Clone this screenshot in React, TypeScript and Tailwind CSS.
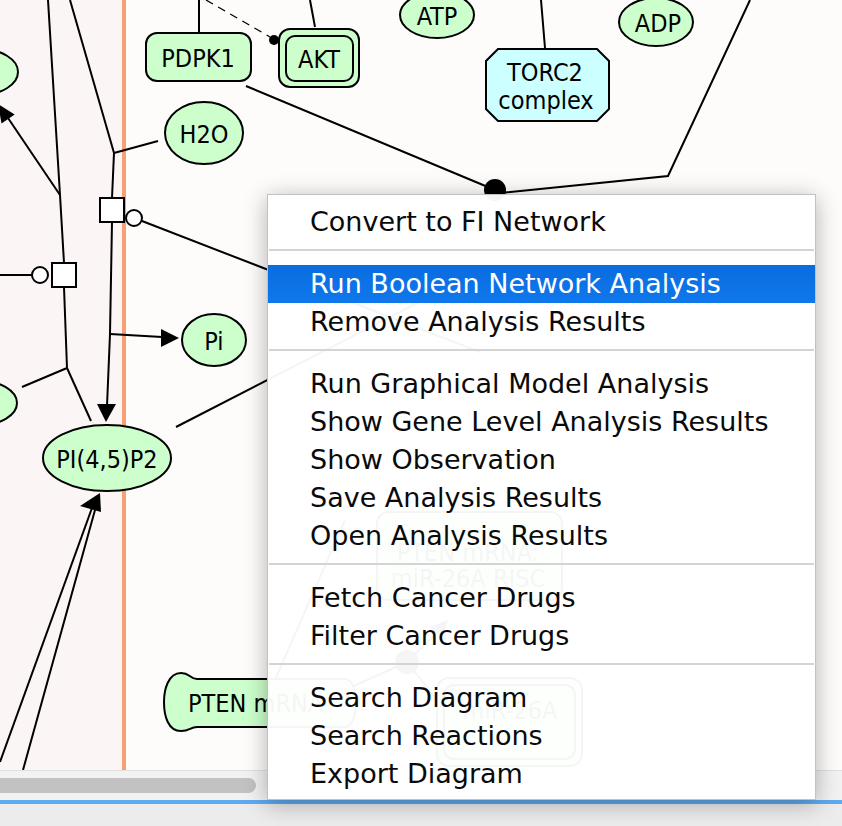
import React from "react";

const groups: string[][] = [
  ["Convert to FI Network"],
  ["Run Boolean Network Analysis", "Remove Analysis Results"],
  [
    "Run Graphical Model Analysis",
    "Show Gene Level Analysis Results",
    "Show Observation",
    "Save Analysis Results",
    "Open Analysis Results",
  ],
  ["Fetch Cancer Drugs", "Filter Cancer Drugs"],
  ["Search Diagram", "Search Reactions", "Export Diagram"],
];

const ACTIVE = "Run Boolean Network Analysis";
const GREEN = "#ccffcc";

function Label({ x, y, children }: { x: number; y: number; children: React.ReactNode }) {
  return (
    <text x={x} y={y} textAnchor="middle" dominantBaseline="central" fill="#000">
      {children}
    </text>
  );
}

function Diagram() {
  const ln = { stroke: "#000", strokeWidth: 2, fill: "none" } as const;
  const node = { stroke: "#000", strokeWidth: 2 } as const;
  return (
    <svg
      width={842}
      height={770}
      className="absolute left-0 top-0 font-['DejaVu_Sans_Condensed','DejaVu_Sans',sans-serif] text-[25px]"
    >
      {/* left compartment */}
      <polyline points="48,0 60,195 64,263" {...ln} />
      <line x1={60} y1={195} x2={8} y2={118} {...ln} />
      <polygon points="-2,104 14.7,114.4 1.5,123.4" fill="#000" />
      <ellipse cx={-20} cy={72} rx={38} ry={23} fill={GREEN} {...node} />
      <line x1={0} y1={275} x2={32} y2={275} {...ln} />
      <circle cx={40} cy={275} r={8} fill="#fff" {...node} />
      <rect x={52} y={263} width={24} height={24} fill="#fff" {...node} />
      <polyline points="64,287 67,368 22,387" {...ln} />
      <line x1={67} y1={368} x2={91} y2={421} {...ln} />
      <ellipse cx={-20} cy={403} rx={37} ry={22} fill={GREEN} {...node} />

      <line x1={70} y1={0} x2={114} y2={153} {...ln} />
      <line x1={114} y1={153} x2={158} y2={141} {...ln} />
      <line x1={114} y1={153} x2={112} y2={198} {...ln} />
      <line x1={142} y1={221} x2={480} y2={352} {...ln} />
      <polyline points="112,222 110,334 107,406" {...ln} />
      <polygon points="106,422 97,404 116,404" fill="#000" />
      <line x1={110} y1={334} x2={162} y2={337} {...ln} />
      <polygon points="179,338 161,329 161,347" fill="#000" />
      <rect x={100} y={198} width={24} height={24} fill="#fff" {...node} />
      <circle cx={134} cy={218} r={8} fill="#fff" {...node} />

      <line x1={0} y1={762} x2={92} y2={508} {...ln} />
      <line x1={23} y1={770} x2={95} y2={510} {...ln} />
      <polygon points="100,493 80,506 101,512" fill="#000" />

      <ellipse cx={204} cy={133} rx={39} ry={31} fill={GREEN} {...node} />
      <Label x={204} y={134}>H2O</Label>
      <ellipse cx={214} cy={340} rx={32} ry={26} fill={GREEN} {...node} />
      <Label x={214} y={341}>Pi</Label>
      <line x1={176} y1={427} x2={470} y2={276} {...ln} />
      <ellipse cx={107} cy={458} rx={64} ry={33} fill={GREEN} {...node} />
      <Label x={107} y={459}>PI(4,5)P2</Label>

      {/* top */}
      <line x1={199} y1={0} x2={199} y2={32} {...ln} />
      <line x1={206} y1={0} x2={270} y2={37} stroke="#000" strokeWidth={1.3} strokeDasharray="8 6" />
      <circle cx={274} cy={40} r={5} fill="#000" />
      <rect x={146} y={33} width={105} height={48} rx={11} fill={GREEN} {...node} />
      <Label x={198} y={58}>PDPK1</Label>
      <line x1={310} y1={0} x2={315} y2={27} {...ln} />
      <rect x={279} y={29} width={80} height={58} rx={11} fill={GREEN} {...node} />
      <rect x={286} y={36} width={67} height={45} rx={9} fill={GREEN} {...node} />
      <Label x={319} y={59}>AKT</Label>
      <line x1={246} y1={86} x2={495} y2={190} {...ln} />
      <ellipse cx={437} cy={15} rx={37} ry={23} fill={GREEN} {...node} />
      <Label x={437} y={16}>ATP</Label>
      <line x1={541} y1={0} x2={545} y2={48} {...ln} />
      <polygon
        points="498,49 597,49 609,61 609,109 597,121 498,121 486,109 486,61"
        fill="#ccffff"
        {...node}
      />
      <Label x={545} y={72}>TORC2</Label>
      <Label x={546} y={100}>complex</Label>
      <ellipse cx={656} cy={22} rx={37} ry={24} fill={GREEN} {...node} />
      <Label x={658} y={23}>ADP</Label>
      <polyline points="750,0 668,176 500,193" {...ln} />
      <circle cx={495} cy={190} r={11} fill="#000" />

      {/* under the popup */}
      <rect x={377} y={512} width={185} height={88} rx={12} fill={GREEN} {...node} />
      <Label x={468} y={552}>PTEN mRNA:</Label>
      <Label x={468} y={578}>miR-26A RISC</Label>
      <line x1={345} y1={690} x2={407} y2={662} {...ln} />
      <line x1={407} y1={662} x2={440} y2={630} {...ln} />
      <polygon points="448,620 430,627 442,638" fill="#000" />
      <line x1={407} y1={662} x2={437} y2={700} {...ln} />
      <line x1={275} y1={680} x2={345} y2={520} {...ln} />
      <circle cx={407} cy={662} r={12} fill="#000" />
      <rect x={437} y={678} width={145} height={88} rx={12} fill={GREEN} {...node} />
      <rect x={444} y={685} width={131} height={74} rx={10} fill={GREEN} {...node} />
      <Label x={510} y={710}>miR-26A</Label>
      <path
        d="M345 679 L197 679 C190 679 190 673 181 673 C168 673 164 690 164 702 C164 716 168 731 181 731 C190 731 190 727 197 727 L345 727 C352 727 356 716 356 703 C356 690 352 679 345 679 Z"
        fill={GREEN}
        {...node}
      />
      <text x={188} y={703} dominantBaseline="central" fill="#000">
        PTEN mRNA
      </text>
    </svg>
  );
}

function PopupMenu() {
  return (
    <div className="absolute left-[267px] top-[194px] w-[549px] h-[606px] border border-[#c2c2c2] bg-white/[0.96] pt-[8px] pb-[6px] shadow-[0_4px_22px_rgba(0,0,0,0.3)] font-['DejaVu_Sans',sans-serif] text-[27px] text-[#0a0a0a]">
      {groups.map((g, gi) => (
        <div key={gi}>
          {gi > 0 && (
            <div className="h-[24px] pt-[8px]">
              <div className="mx-px h-[2px] bg-[#d4d4d4]" />
            </div>
          )}
          {g.map((item) => (
            <div
              key={item}
              className={
                item === ACTIVE
                  ? "h-[38px] pl-[42px] leading-[38px] whitespace-nowrap bg-gradient-to-b from-[#0a6cdf] to-[#0f78ec] text-white"
                  : "h-[38px] pl-[42px] leading-[38px] whitespace-nowrap"
              }
            >
              {item}
            </div>
          ))}
        </div>
      ))}
    </div>
  );
}

export default function App() {
  return (
    <div className="relative w-[842px] h-[826px] overflow-hidden bg-[#ececec]">
      <div className="flex flex-col">
        <div className="relative h-[770px] flex">
          <div className="w-[122px] bg-[#fcf5f5]" />
          <div className="w-[4px] bg-[#f7a073]" />
          <div className="flex-1 bg-[#fdfcfb]" />
          <Diagram />
        </div>
        <div className="h-[30px] border-t border-[#e0e0e0] bg-[#f2f2f2] pt-[7px]">
          <div className="h-[15px] w-[256px] rounded-r-full bg-[#c2c2c2]" />
        </div>
        <div className="h-[4px] bg-[#5eaaf0]" />
        <div className="flex-1 bg-[#ececec]" />
      </div>
      <PopupMenu />
    </div>
  );
}
